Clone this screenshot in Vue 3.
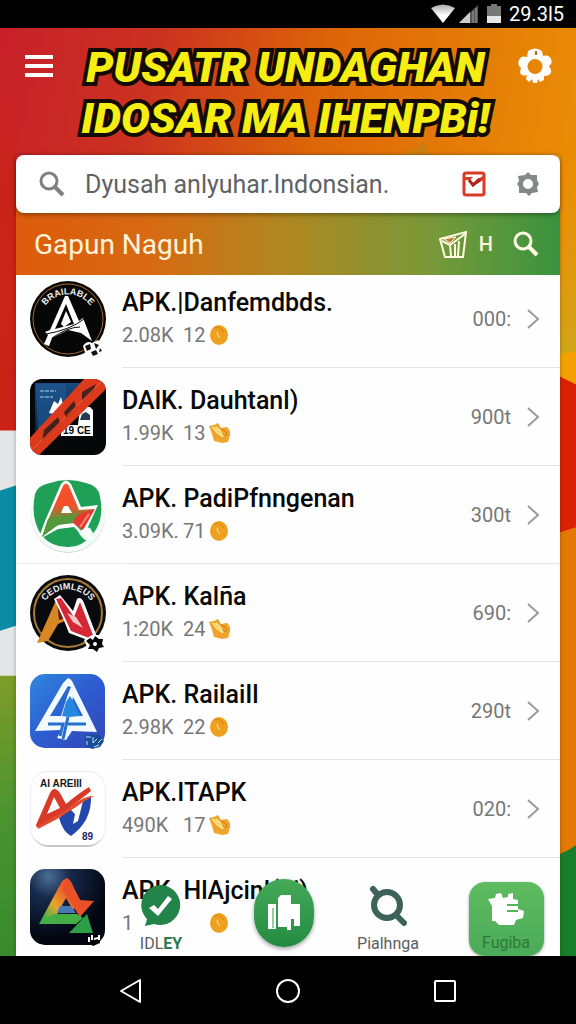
<script setup>
import { ref } from 'vue';

const query = ref('');

const apps = [
  { icon: 'arch', name: 'APK.|Danfemdbds.', size: '2.08K', count: '12', mark: 'coin', value: '000:' },
  { icon: 'ribbon', name: 'DAlK. Dauhtanl)', size: '1.99K', count: '13', mark: 'hand', value: '900t' },
  { icon: 'leaf', name: 'APK. PadiPfnngenan', size: '3.09K.', count: '71', mark: 'coin', value: '300t', wide: true },
  { icon: 'flame', name: 'APK. Kalña', size: '1:20K', count: '24', mark: 'hand', value: '690:' },
  { icon: 'delta', name: 'APK. RailaiIl', size: '2.98K', count: '22', mark: 'coin', value: '290t' },
  { icon: 'paper', name: 'APK.ITAPK', size: '490K', count: '17', mark: 'hand', value: '020:' },
  { icon: 'night', name: 'APK. HlAjcinl(di)', size: '1', count: '', mark: 'coin', value: '' },
];
</script>

<template>
  <div class="screen">
    <div class="status">
      <svg width="24" height="20" viewBox="0 0 24 20"><defs><linearGradient id="wifi" x2="0" y2="1"><stop stop-color="#aaa" /><stop offset=".6" stop-color="#fff" /></linearGradient></defs><path d="M0 4Q12-3 24 4L12 19Z" fill="url(#wifi)" /></svg>
      <svg width="20" height="20" viewBox="0 0 20 20"><path d="M0 19L19 1V19Z" fill="#555" /><path d="M0 19L11 8V19Z" fill="#ccc" /><path d="M14 7V19M17 4V19" stroke="#999" /></svg>
      <svg class="status__battery" width="14" height="20" viewBox="0 0 14 20"><path d="M0 2H4V0H10V2H14V19H0Z" fill="#777" /><path d="M0 12H14V19H0Z" fill="#e6e6e6" /></svg>
      <span>29.3l5</span>
    </div>

    <main class="page">
      <svg class="page__backdrop" viewBox="0 0 576 927" preserveAspectRatio="none" aria-hidden="true">
        <defs>
          <linearGradient id="sky" x1="0" y1="0" x2="1" y2=".35">
            <stop stop-color="#c7202a" />
            <stop offset=".25" stop-color="#cb3220" />
            <stop offset=".52" stop-color="#dd6608" />
            <stop offset="1" stop-color="#ec9405" />
          </linearGradient>
          <linearGradient id="brick" x2="0" y2="1"><stop stop-color="#c92318" stop-opacity="0" /><stop offset=".3" stop-color="#c92318" /><stop offset="1" stop-color="#cc2216" /></linearGradient>
          <linearGradient id="grass" x2="0" y2="1"><stop stop-color="#7f9c28" /><stop offset=".5" stop-color="#4a9430" /><stop offset="1" stop-color="#398a2c" /></linearGradient>
          <linearGradient id="mustard" x2="0" y2="1"><stop stop-color="#e8940a" stop-opacity="0" /><stop offset="1" stop-color="#cfa51a" /></linearGradient>
        </defs>
        <rect width="576" height="927" fill="url(#sky)" />
        <path d="M400 128Q415 122 425 112L430 128Z" fill="#b8841b" opacity=".5" />
        <path d="M0 60H16V402H0Z" fill="url(#brick)" />
        <path d="M0 402H16V927H0Z" fill="#e3e5e7" />
        <path d="M0 462L16 457V597L0 602Z" fill="#0b8ca4" />
        <path d="M0 647H16V927H0Z" fill="url(#grass)" />
        <path d="M560 130H576V326H560Z" fill="url(#mustard)" />
        <path d="M560 326L576 322V500H560Z" fill="#f4a000" />
        <path d="M560 348L576 356V499L560 504Z" fill="#d92203" />
        <path d="M560 504L576 499V820L560 826Z" fill="#e47a05" />
        <path d="M560 825Q568 822 576 816V927H560Z" fill="#177f2b" />
      </svg>

      <header class="banner">
        <button class="plain" type="button" aria-label="Menu">
          <svg width="28" height="22" viewBox="0 0 28 22"><path d="M0 2H28M0 11H28M0 20H28" stroke="#fff" stroke-width="4" /></svg>
        </button>
        <h1 class="banner__title">PUSATR UNDAGHAN<br>IDOSAR MA IHENPBi!</h1>
        <button class="plain" type="button" aria-label="Settings">
          <svg width="34" height="36" viewBox="0 0 34 36"><path fill="#fff" fill-rule="evenodd" d="M10 3Q17-2 24 3L25 8Q31 6 33 11Q35 16 31 18L33 22Q34 27 28 28L26 28V32L22 34L20 31L19 35H15L14 31L11 34L8 31L9 27Q3 29 2 24L3 20Q-1 17 1 12Q3 7 9 9ZM17 11A7 7 0 1 0 17 26A7 7 0 1 0 17 11Z" /><path d="M18 3V7" stroke="#c60" stroke-width="2" /></svg>
        </button>
      </header>

      <section class="panel">
        <form class="search" @submit.prevent>
          <svg width="26" height="26" viewBox="0 0 26 26" fill="none" stroke="#808080" stroke-width="3"><circle cx="10" cy="10" r="8" /><path d="M16 16L24 24" stroke-width="4" /></svg>
          <input v-model="query" type="search" aria-label="Search" placeholder="Dyusah anlyuhar.Indonsian.">
          <button class="plain" type="button" aria-label="Saved">
            <svg width="24" height="26" viewBox="0 0 24 26"><rect x="2" y="2" width="20" height="22" rx="2" fill="#fff" stroke="#d63b2a" stroke-width="3" /><path d="M3 6H11L8 9H3ZM14 9L21 5V9L15 13Z" fill="#d63b2a" /><path d="M7 9L11 14L18 8" fill="none" stroke="#b0221a" stroke-width="3" /></svg>
          </button>
          <button class="plain" type="button" aria-label="Options">
            <svg width="22" height="24" viewBox="0 0 22 24"><path fill="#858788" fill-rule="evenodd" d="M8 3L11 0L14 3L20 3L20 8L22 12L20 15L21 20L15 21L12 24L9 21L2 21L2 15L0 12L2 9L1 4ZM11 7A5 5 0 1 0 11 17A5 5 0 1 0 11 7Z" /></svg>
          </button>
        </form>

        <div class="bar">
          <h2 class="bar__title">Gapun Naguh</h2>
          <button class="plain" type="button" aria-label="Basket">
            <svg width="28" height="28" viewBox="0 0 28 28" fill="none" stroke="#fff9df" stroke-width="2"><path d="M1 9L27 2L24 27H6Z" /><path d="M5 9L17 7L11 13Z" fill="#b97b29" stroke-width="1" /><path d="M3 11L11 15L26 4M11 15L12 26M16 14V26M20 11L19 26" /></svg>
          </button>
          <span class="bar__mark">H</span>
          <button class="plain" type="button" aria-label="Find">
            <svg width="26" height="26" viewBox="0 0 26 26" fill="none" stroke="#fff9e8" stroke-width="3"><circle cx="10" cy="10" r="8" /><path d="M16 16L24 24" stroke-width="4" /></svg>
          </button>
        </div>

        <ul class="list">
          <li v-for="app in apps" :key="app.icon">
            <a class="row" :class="{ 'row--wide': app.wide }" href="#">
              <svg class="row__icon" width="76" height="76" viewBox="0 0 76 76">
                <template v-if="app.icon === 'arch'">
                  <defs><path id="arc1" d="M12 31A28 28 0 0 1 64 31" /></defs>
                  <circle cx="38" cy="38" r="38" fill="#070707" />
                  <circle cx="38" cy="38" r="35" fill="none" stroke="#a5692c" />
                  <text class="emblem"><textPath href="#arc1" startOffset="50%" text-anchor="middle">BRAILABLE</textPath></text>
                  <path fill="#fff" fill-rule="evenodd" d="M35 15H38L49 40L53 37L62 60L51 52L38 49L22 57L19 65L14 63L18 54L15 51L20 49ZM36 23L25 48L44 43ZM36 30L41 41L34 46L31 43Z" />
                  <path d="M16 53Q40 49 54 38M22 57Q38 46 50 46" fill="none" stroke="#070707" />
                  <path d="M53 65Q57 59 62 62L68 59L73 65L72 74L65 75L60 77L56 74Z" fill="#fff" />
                  <path d="M55 65L60 63L61 68L57 70ZM64 62L69 64L66 68ZM61 71L66 69L68 73L63 75ZM70 67L72 70L69 71Z" fill="#111" />
                </template>
                <template v-else-if="app.icon === 'ribbon'">
                  <defs>
                    <clipPath id="tile"><rect width="76" height="76" rx="12" /></clipPath>
                    <linearGradient id="blue" x2="0" y2="1"><stop stop-color="#164b80" /><stop offset="1" stop-color="#071a35" /></linearGradient>
                  </defs>
                  <g clip-path="url(#tile)">
                    <rect width="76" height="76" fill="#050709" />
                    <path d="M5 4H56V26L8 60L5 56Z" fill="url(#blue)" />
                    <path d="M6 8Q6 5 9 5H36V35L8 56Z" fill="#1e5790" opacity=".7" />
                    <path d="M10 12H26M10 18H23" stroke="#bad2e8" stroke-dasharray="4 1" />
                    <path d="M19 34L24 22L28 25L31 18L33 25L37 22V30L29 36Z" fill="#fff" />
                    <path d="M50 28H60L63 31V57H31V46H48Z" fill="#fff" />
                    <path d="M52 35L56 33L60 36V41H50Z" fill="#26395a" />
                    <text x="33" y="55" class="tiny" fill="#050505">19 CE</text>
                    <path d="M54 0H76V10L9 76H0V59Z" fill="#dc3a1d" />
                    <path d="M14 51L28 38L30 44L12 62ZM34 33L44 22L46 28L36 39ZM52 13L66 5L63 12L52 22Z" fill="#4a201e" />
                    <path d="M3 70L74 0" stroke="#f45b31" />
                  </g>
                </template>
                <template v-else-if="app.icon === 'leaf'">
                  <defs>
                    <linearGradient id="leafA" x2="0" y2="1"><stop offset=".4" stop-color="#f4502c" /><stop offset=".65" stop-color="#659138" /><stop offset="1" stop-color="#29a357" /></linearGradient>
                  </defs>
                  <circle cx="38" cy="39" r="37" fill="#d5dcda" />
                  <circle cx="38" cy="38" r="37" fill="#f5fbf8" />
                  <path d="M5 17Q8 8 20 6Q37 0 56 6Q69 9 70 20Q75 43 62 58Q51 71 37 70Q22 70 12 59Q0 42 5 17Z" fill="#20a057" />
                  <path d="M8 63L15 44L31 7Q36 0 41 7L51 30L68 28L58 50L64 62Q56 66 49 55L44 50L28 52Z" fill="#fff" />
                  <path d="M12 60L18 43L33 9Q36 4 39 9L49 33L64 32L56 44L51 54L44 46L28 48Z" fill="url(#leafA)" />
                  <path d="M46 38L65 32L53 53L43 46Z" fill="#e3392f" />
                  <path d="M18 42L50 37L40 45Q26 46 12 60Z" fill="#55983a" />
                  <path d="M31 36L34 29L38 29L42 36Z" fill="#fff" />
                  <path d="M48 52Q53 64 64 65M59 51L65 61" stroke="#e8fff2" stroke-width="2" fill="none" />
                  <path d="M50 50L59 37" stroke="#fb8b75" stroke-width="2" />
                </template>
                <template v-else-if="app.icon === 'flame'">
                  <defs><path id="arc2" d="M14 28A28 28 0 0 1 62 28" /></defs>
                  <circle cx="38" cy="38" r="38" fill="#090a0e" />
                  <circle cx="38" cy="38" r="34" fill="none" stroke="#a77b35" stroke-width="2" />
                  <text class="emblem"><textPath href="#arc2" startOffset="50%" text-anchor="middle">CEDIMLEUS</textPath></text>
                  <path d="M27 23L7 68L18 66L28 49L37 45Z" fill="#d98725" />
                  <path d="M27 26L37 43L29 45Z" fill="#5a1e1a" />
                  <path d="M24 24L30 20L43 36L47 24Q51 21 54 28L67 62L63 67L39 58L33 43Z" fill="#fff" />
                  <path d="M26 24L31 23L44 42L50 27L63 60L59 63L41 56Z" fill="#d52735" />
                  <path d="M37 38L46 42L53 53L43 47Z" fill="#f5c8c5" />
                  <path d="M54 65L62 60L70 60L76 68L73 76L59 77Z" fill="#fff" />
                  <path d="M56 66L60 63L63 65L65 61L69 64L73 64L72 69L74 72L69 73L67 77L63 74L58 74L60 70Z" fill="#080808" />
                  <circle cx="65" cy="69" r="2" fill="#fff" />
                </template>
                <template v-else-if="app.icon === 'delta'">
                  <defs><linearGradient id="royal" x1="1" y1="1" x2="0"><stop stop-color="#3346b5" /><stop offset=".5" stop-color="#2d5cd1" /><stop offset="1" stop-color="#3187de" /></linearGradient></defs>
                  <rect y="1" width="75" height="74" rx="15" fill="url(#royal)" />
                  <path fill="#f1faff" d="M38 5Q41 5 44 12L67 59L42 58L36 67L27 65L31 57L5 58L33 10Z" />
                  <path d="M38 13L20 43H31L38 21L41 14ZM43 24L39 43H53Z" fill="#2b66d2" />
                  <path d="M36 29L40 23L43 28L50 43L39 44L32 43Z" fill="#2486df" />
                  <path d="M18 51H33L30 63M38 44L33 66M38 51H56" fill="none" stroke="#2670cf" stroke-width="3" />
                  <path d="M55 64L61 61L70 62L74 68L70 74L62 76L55 72Z" fill="#174e9c" />
                  <path d="M56 64H61M57 68V72M63 64V70L67 66M68 70L72 66M64 74L69 72" stroke="#bfe3ff" fill="none" />
                </template>
                <template v-else-if="app.icon === 'paper'">
                  <rect x="1" y="3" width="74" height="73" rx="18" fill="#c3c5c6" />
                  <rect width="76" height="74" rx="18" fill="#f0f0f0" />
                  <rect x="1" y="1" width="74" height="73" rx="17" fill="#fff" />
                  <text x="10" y="16" class="heading">AI AREIII</text>
                  <path d="M29 47L40 38L45 43L43 53L48 50L53 30L61 25Q62 50 41 65Q33 61 29 47Z" fill="#2447ac" />
                  <path fill="#d93a27" fill-rule="evenodd" d="M6 54L20 22Q24 14 30 22L36 33Q49 22 59 16L61 20L36 40Q22 47 7 57ZM24 26L17 43L30 37Z" />
                  <path d="M9 54Q36 40 42 35Q55 24 64 25Q55 29 46 36L27 48L8 58Z" fill="#e24a2d" />
                  <text x="52" y="69" class="tiny" fill="#1b2766">89</text>
                </template>
                <template v-else>
                  <defs>
                    <radialGradient id="dusk" cx=".25" cy=".1" r=".8"><stop stop-color="#4b6e98" /><stop offset=".35" stop-color="#172a4c" /><stop offset="1" stop-color="#030611" /></radialGradient>
                    <linearGradient id="warm" x1="1" y1="0" x2="0" y2="1"><stop offset=".3" stop-color="#ec5828" /><stop offset=".6" stop-color="#e5a62d" /><stop offset=".9" stop-color="#31b34a" /></linearGradient>
                  </defs>
                  <rect width="75" height="76" rx="15" fill="url(#dusk)" />
                  <path d="M9 55L31 14Q36 6 41 14L51 33L43 41L36 29L24 51Z" fill="url(#warm)" />
                  <path d="M36 9Q40 9 43 17L50 31L64 32L50 48L33 22Z" fill="#eb5128" />
                  <path d="M30 37H41L46 44H27Z" fill="#4779b7" />
                  <path d="M9 55L24 45H47L53 49L46 55Z" fill="#45ad45" />
                  <path d="M39 64L57 45L63 64Z" fill="#2d9e47" />
                  <path d="M58 68L65 66L70 68V74L63 77L59 74Z" fill="#000" />
                  <path d="M59 68V73M62 66V71M64 70L68 69M69 66V71" stroke="#fff" stroke-width="2" />
                </template>
              </svg>
              <span class="row__body">
                <span class="row__text">
                  <span class="row__name">{{ app.name }}</span>
                  <span class="row__meta">
                    <span class="row__size">{{ app.size }}</span>
                    <span class="row__count">{{ app.count }}</span>
                    <svg v-if="app.mark === 'coin'" width="20" height="22" viewBox="0 0 20 22"><ellipse cx="10" cy="11" rx="9" ry="10" fill="#eea020" /><path d="M5 4Q12 2 15 8" fill="none" stroke="#d98112" /><path d="M8 8L9 12L11 14" fill="none" stroke="#fff0a0" /></svg>
                    <svg v-else width="22" height="22" viewBox="0 0 22 22"><path d="M0 4L5 3L9 1L12 6L18 5Q22 9 21 13L19 20L13 21L5 19L3 12Z" fill="#f0a32d" /><path d="M3 5L8 11L14 15L11 8L7 5" fill="#fbd46c" stroke="#fff1ae" /><path d="M12 7Q18 9 18 12L15 14" fill="none" stroke="#cf7c17" /></svg>
                  </span>
                </span>
                <template v-if="app.value">
                  <span class="row__value">{{ app.value }}</span>
                  <svg width="14" height="20" viewBox="0 0 14 20"><path d="M2 1L12 10L2 19" fill="none" stroke="#9b9b9b" stroke-width="2" /></svg>
                </template>
              </span>
            </a>
          </li>
        </ul>

        <nav class="tabs">
          <a class="tab" href="#">
            <svg width="40" height="42" viewBox="0 0 40 42"><path d="M20 0A20 20 0 1 1 13 39L4 41L6 34A20 20 0 0 1 20 0Z" fill="#238449" /><path d="M8 23L13 20L17 24L27 11L31 14L17 31Z" fill="#fff" /></svg>
            <span class="tab__label">IDL<b>EY</b></span>
          </a>
          <a class="tab tab--round" href="#" aria-label="Library">
            <svg width="34" height="38" viewBox="0 0 34 38"><path d="M1 10H9V35H1ZM11 4L14 1H24V10H33V32H27V25H24V36H20V33H11Z" fill="#fff" /><path d="M6 14V34" stroke="#2d9649" /></svg>
          </a>
          <a class="tab" href="#">
            <svg width="38" height="42" viewBox="0 0 38 42" fill="none" stroke="#3c6259"><circle cx="18" cy="20" r="13" stroke-width="6" /><path d="M4 4L9 10M27 30L35 38" stroke-width="6" stroke-linecap="round" /></svg>
            <span class="tab__label">Pialhnga</span>
          </a>
          <a class="tab tab--active" href="#">
            <svg width="38" height="34" viewBox="0 0 38 34"><path d="M1 7L8 6L9 2L14 1L16 6L21 5V2L26 1V7L31 8V17L37 19L36 26L29 28L27 33L12 33L8 29L5 29V14Z" fill="#fff" /><path d="M20 13H31M20 19H31" stroke="#55b35c" stroke-width="2" /></svg>
            <span class="tab__label">Fugiba</span>
          </a>
        </nav>
      </section>
    </main>

    <nav class="system">
      <button class="plain" type="button" aria-label="Back"><svg width="24" height="26" viewBox="0 0 24 26"><path d="M21 2V24L2 13Z" fill="none" stroke="#fff" stroke-width="2" stroke-linejoin="round" /></svg></button>
      <button class="plain" type="button" aria-label="Home"><svg width="24" height="26" viewBox="0 0 24 26"><circle cx="12" cy="13" r="11" fill="none" stroke="#fff" stroke-width="2" /></svg></button>
      <button class="plain" type="button" aria-label="Recent"><svg width="24" height="26" viewBox="0 0 24 26"><rect x="2" y="3" width="20" height="20" rx="1" fill="none" stroke="#fff" stroke-width="2" /></svg></button>
    </nav>
  </div>
</template>

<style>
body {
  margin: 0;
  background: #000;
}
</style>

<style scoped>
.screen {
  display: flex;
  flex-direction: column;
  min-height: 100vh;
  font-family: Roboto, "Liberation Sans", sans-serif;
  background: #000;
}

svg {
  display: block;
  flex: none;
}

.plain {
  padding: 0;
  border: 0;
  background: none;
  cursor: pointer;
}

.status {
  display: flex;
  align-items: center;
  justify-content: flex-end;
  gap: 4px;
  height: 28px;
  padding-right: 12px;
  color: #fff;
  font-size: 20px;
}

.status__battery {
  margin: 0 4px;
}

.page {
  position: relative;
  flex: 1;
  display: flex;
  flex-direction: column;
}

.page__backdrop {
  position: absolute;
  inset: 0;
  width: 100%;
  height: 100%;
}

.banner {
  position: relative;
  display: flex;
  align-items: flex-start;
  justify-content: space-between;
  padding: 14px 24px 11px 25px;
}

.banner .plain {
  display: flex;
  align-items: center;
  height: 48px;
}

.banner__title {
  margin: 0;
  color: #f6ee13;
  font-size: 43px;
  font-style: italic;
  font-weight: 900;
  line-height: 51px;
  text-align: center;
  white-space: nowrap;
  -webkit-text-stroke: 8px #130b02;
  paint-order: stroke fill;
}

.panel {
  position: relative;
  flex: 1;
  display: flex;
  flex-direction: column;
  margin: 0 16px;
  box-shadow: 0 0 4px rgba(0, 0, 0, 0.3);
}

.search {
  position: relative;
  z-index: 1;
  display: flex;
  align-items: center;
  height: 58px;
  padding: 0 21px 0 23px;
  border-radius: 8px;
  background: #fff;
  box-shadow: 0 2px 4px rgba(0, 0, 0, 0.35);
}

.search input {
  flex: 1;
  min-width: 0;
  height: 40px;
  margin-left: 20px;
  padding: 0;
  border: 0;
  outline: 0;
  background: none;
  color: #5f6264;
  font: 25px Roboto, sans-serif;
}

.search input::placeholder {
  color: #5f6264;
  opacity: 1;
}

.search .plain + .plain {
  margin-left: 31px;
}

.bar {
  display: flex;
  align-items: center;
  height: 62px;
  margin-top: -8px;
  padding: 8px 21px 0 18px;
  box-sizing: content-box;
  background: linear-gradient(90deg, #dd5b0c, #d76a12 25%, #b08721 50%, #74993a 78%, #39933e);
  color: #fff4d9;
}

.bar__title {
  flex: 1;
  margin: 0;
  font-size: 28px;
  font-weight: 400;
}

.bar__mark {
  margin: 0 20px 0 12px;
  font-size: 20px;
  font-weight: 500;
}

.list {
  flex: 1;
  margin: 0;
  padding: 0;
  list-style: none;
  background: #fefefe;
}

.list li:first-child {
  margin-top: -5px;
}

.row {
  display: flex;
  align-items: center;
  gap: 16px;
  height: 98px;
  padding-left: 14px;
  color: #080808;
  text-decoration: none;
}

.row--wide {
  box-shadow: inset 0 -1px #ececec;
}

.row__icon {
  overflow: visible;
}

.row__body {
  flex: 1;
  display: flex;
  align-items: center;
  gap: 15px;
  height: 97px;
  padding-right: 20px;
  border-bottom: 1px solid #e4e4e4;
}

.list li:last-child .row__body {
  border-color: transparent;
}

.row__text {
  flex: 1;
}

.row__name {
  display: block;
  font-size: 25px;
  font-weight: 500;
  line-height: 32px;
  white-space: pre;
}

.row__meta {
  display: flex;
  align-items: center;
  height: 32px;
  color: #777;
  font-size: 20px;
}

.row__size {
  width: 61px;
}

.row__count {
  width: 26px;
}

.row__value {
  color: #777;
  font-size: 20px;
}

.emblem {
  fill: #eee;
  font: bold 9px "Liberation Sans", sans-serif;
}

.tiny {
  font: bold 10px "Liberation Sans", sans-serif;
}

.heading {
  fill: #171717;
  font: bold 10px "Liberation Sans", sans-serif;
}

.tabs {
  position: absolute;
  right: 0;
  bottom: 0;
  left: 62px;
  display: grid;
  grid-template-columns: 166fr 80fr 128fr 108fr;
  align-items: end;
  justify-items: center;
}

.tab {
  display: flex;
  flex-direction: column;
  align-items: center;
  gap: 7px;
  padding-bottom: 2px;
  color: #59605e;
  text-decoration: none;
}

.tab__label {
  font-size: 16px;
  line-height: 20px;
}

.tab__label b {
  color: #2b7950;
}

.tab--round {
  justify-content: center;
  width: 60px;
  height: 68px;
  margin-bottom: 9px;
  padding: 0;
  border-radius: 30px;
  background: linear-gradient(#45a958, #238b42);
  box-shadow: 0 2px 4px rgba(0, 0, 0, 0.35);
}

.tab--active {
  box-sizing: border-box;
  width: 75px;
  height: 74px;
  padding-top: 10px;
  border-radius: 16px;
  background: linear-gradient(#5fbb60, #4aab58);
  box-shadow: 0 1px 3px rgba(0, 0, 0, 0.4);
  color: #2b793c;
}

.system {
  position: relative;
  display: flex;
  align-items: center;
  justify-content: center;
  gap: 133px;
  height: 69px;
  background: #000;
}
</style>
